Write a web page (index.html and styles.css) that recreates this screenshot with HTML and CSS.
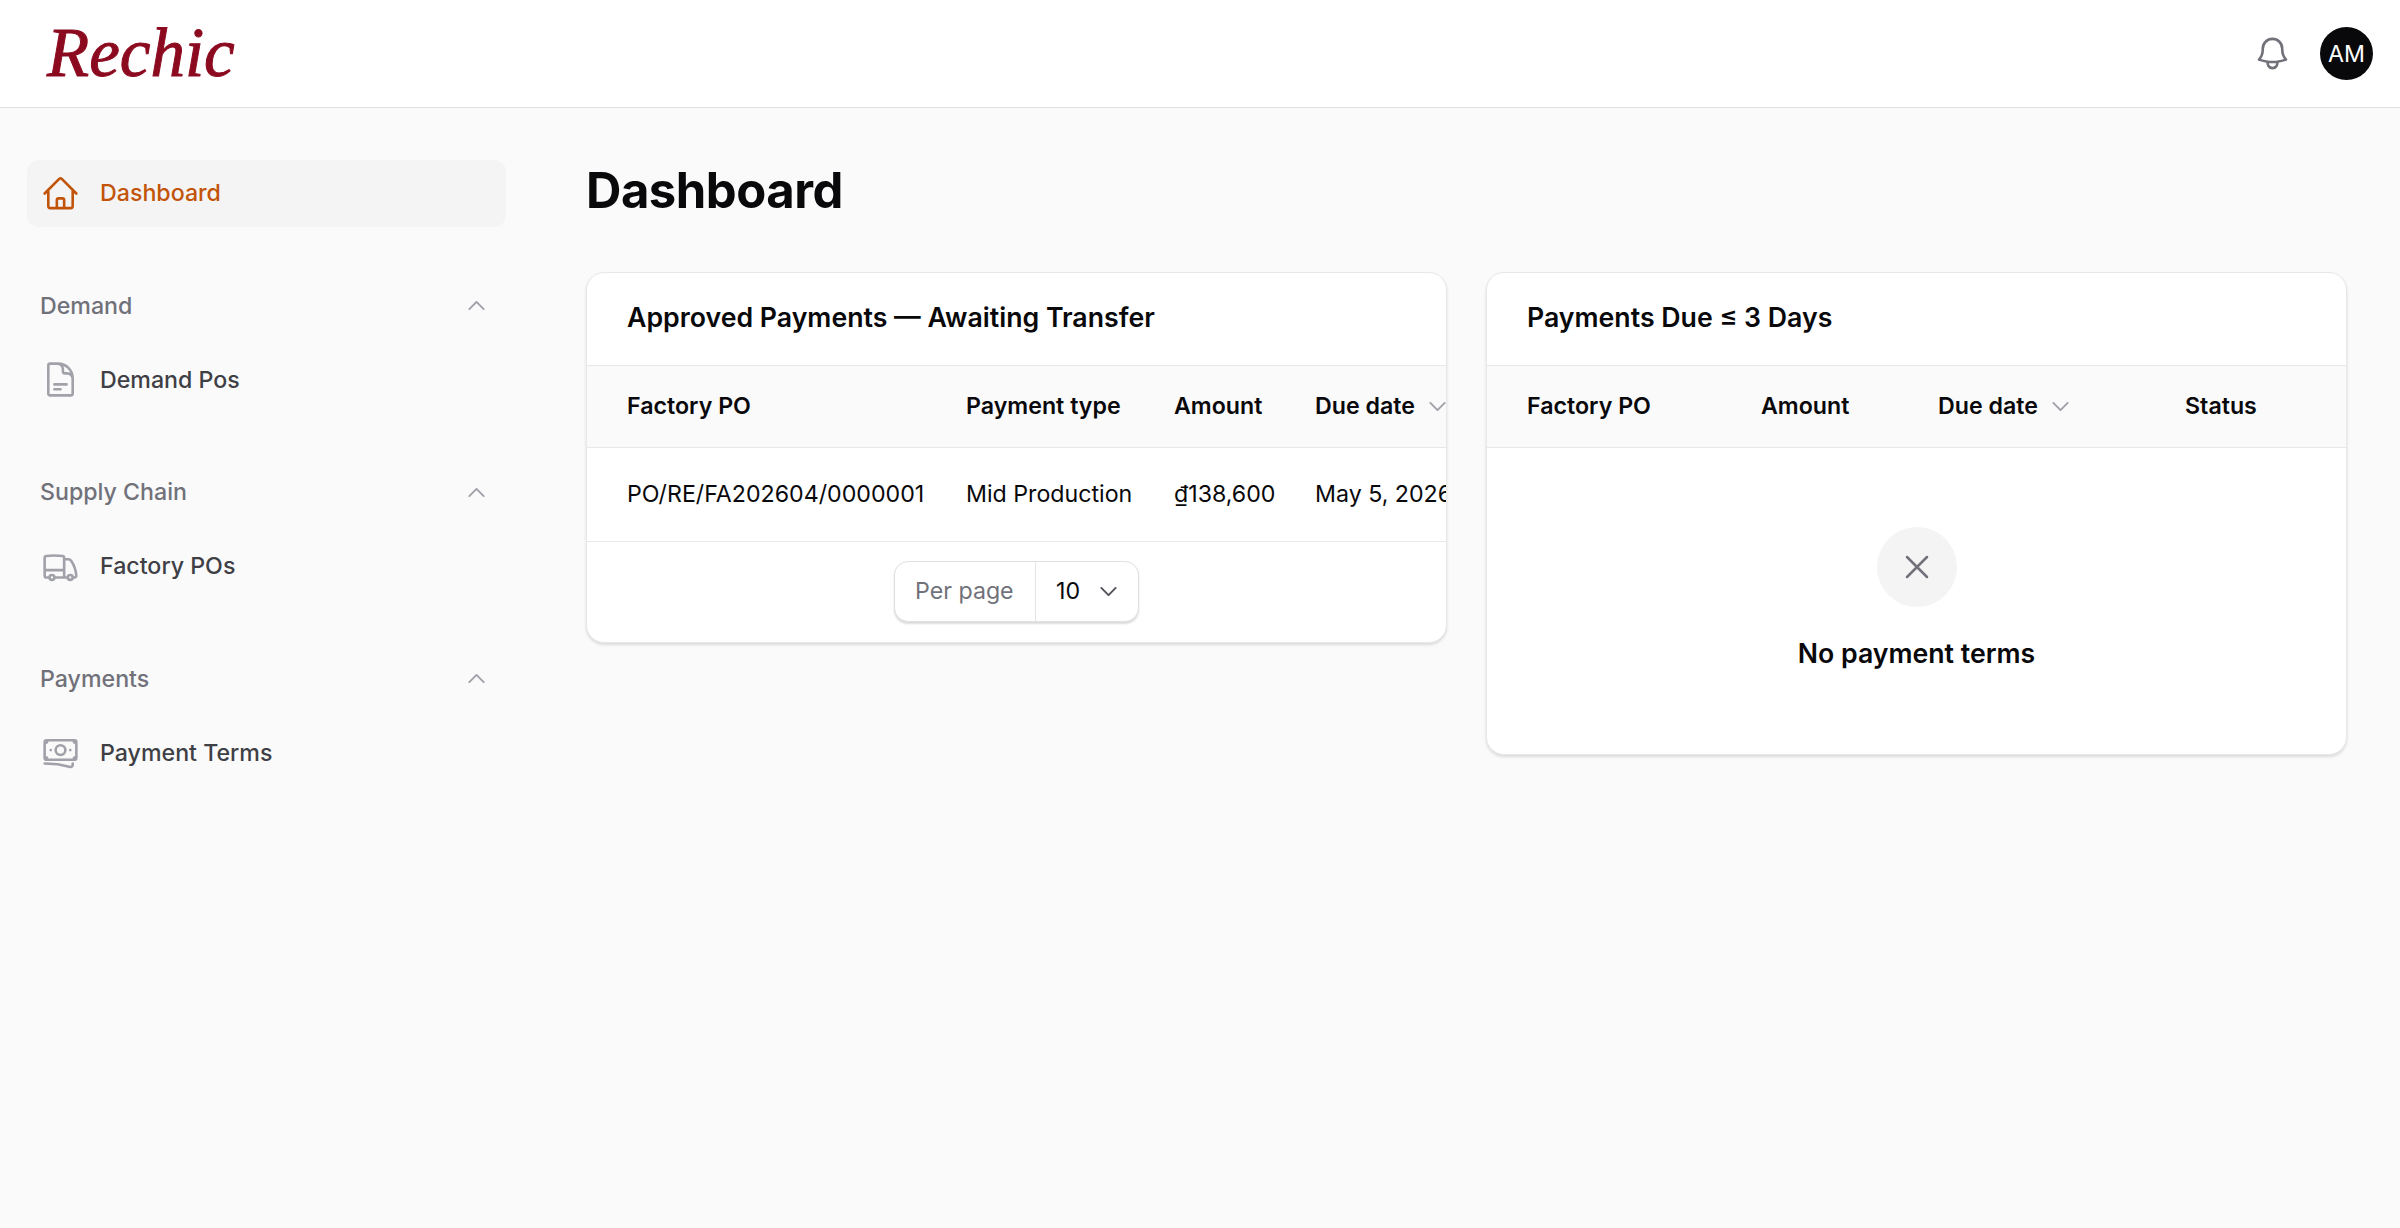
FILE: index.html
```html
<!DOCTYPE html>
<html lang="en">
<head>
  <meta charset="UTF-8">
  <meta name="viewport" content="width=device-width, initial-scale=1.0">
  <title>Dashboard</title>
  <link rel="stylesheet" href="styles.css">
</head>
<body>

<header class="topbar">
  <a href="#" class="logo">Rechic</a>
  <div class="topbar-right">
    <svg class="icon bell" viewBox="0 0 24 24"><path d="M14.857 17.082a23.848 23.848 0 0 0 5.454-1.31A8.967 8.967 0 0 1 18 9.75V9A6 6 0 0 0 6 9v.75a8.967 8.967 0 0 1-2.312 6.022c1.733.64 3.56 1.085 5.455 1.31m5.714 0a24.255 24.255 0 0 1-5.714 0m5.714 0a3 3 0 1 1-5.714 0"/></svg>
    <div class="avatar">AM</div>
  </div>
</header>

<div class="layout">
  <aside class="sidebar">
    <a href="#" class="nav-item active">
      <svg class="icon" viewBox="0 0 24 24"><path d="m2.25 12 8.954-8.955c.44-.439 1.152-.439 1.591 0L21.75 12M4.5 9.75v10.125c0 .621.504 1.125 1.125 1.125H9.75v-4.875c0-.621.504-1.125 1.125-1.125h2.25c.621 0 1.125.504 1.125 1.125V21h4.125c.621 0 1.125-.504 1.125-1.125V9.75M8.25 21h8.25"/></svg>
      <span>Dashboard</span>
    </a>

    <div class="nav-group">
      <div class="nav-label">
        <span>Demand</span>
        <svg class="chevron" viewBox="0 0 24 24"><path d="m4.5 15.75 7.5-7.5 7.5 7.5"/></svg>
      </div>
      <a href="#" class="nav-item">
        <svg class="icon" viewBox="0 0 24 24"><path d="M19.5 14.25v-2.625a3.375 3.375 0 0 0-3.375-3.375h-1.5A1.125 1.125 0 0 1 13.5 7.125v-1.5a3.375 3.375 0 0 0-3.375-3.375H8.25m0 12.75h7.5m-7.5 3H12M10.5 2.25H5.625c-.621 0-1.125.504-1.125 1.125v17.25c0 .621.504 1.125 1.125 1.125h12.75c.621 0 1.125-.504 1.125-1.125V11.25a9 9 0 0 0-9-9Z"/></svg>
        <span>Demand Pos</span>
      </a>
    </div>

    <div class="nav-group">
      <div class="nav-label">
        <span>Supply Chain</span>
        <svg class="chevron" viewBox="0 0 24 24"><path d="m4.5 15.75 7.5-7.5 7.5 7.5"/></svg>
      </div>
      <a href="#" class="nav-item">
        <svg class="icon" viewBox="0 0 24 24"><path d="M8.25 18.75a1.5 1.5 0 0 1-3 0m3 0a1.5 1.5 0 0 0-3 0m3 0h6m-9 0H3.375a1.125 1.125 0 0 1-1.125-1.125V14.25m17.25 4.5a1.5 1.5 0 0 1-3 0m3 0a1.5 1.5 0 0 0-3 0m3 0h1.125c.621 0 1.129-.504 1.09-1.124a17.902 17.902 0 0 0-3.213-9.193 2.056 2.056 0 0 0-1.58-.86H14.25M16.5 18.75h-2.25m0-11.177v-.958c0-.568-.422-1.048-.987-1.106a48.554 48.554 0 0 0-10.026 0 1.106 1.106 0 0 0-.987 1.106v7.635m12-6.677v6.677m0 4.5v-4.5m0 0h-12"/></svg>
        <span>Factory POs</span>
      </a>
    </div>

    <div class="nav-group">
      <div class="nav-label">
        <span>Payments</span>
        <svg class="chevron" viewBox="0 0 24 24"><path d="m4.5 15.75 7.5-7.5 7.5 7.5"/></svg>
      </div>
      <a href="#" class="nav-item">
        <svg class="icon" viewBox="0 0 24 24"><path d="M2.25 18.75a60.07 60.07 0 0 1 15.797 2.101c.727.198 1.453-.342 1.453-1.096V18.75M3.75 4.5v.75A.75.75 0 0 1 3 6h-.75m0 0v-.375c0-.621.504-1.125 1.125-1.125H20.25M2.25 6v9m18-10.5v.75c0 .414.336.75.75.75h.75m-1.5-1.5h.375c.621 0 1.125.504 1.125 1.125v9.75c0 .621-.504 1.125-1.125 1.125h-.375m1.5-1.5H21a.75.75 0 0 0-.75.75v.75m0 0H3.75m0 0h-.375a1.125 1.125 0 0 1-1.125-1.125V15m1.5 1.5v-.75A.75.75 0 0 0 3 15h-.75M15 10.5a3 3 0 1 1-6 0 3 3 0 0 1 6 0Zm3 0h.008v.008H18V10.5Zm-12 0h.008v.008H6V10.5Z"/></svg>
        <span>Payment Terms</span>
      </a>
    </div>
  </aside>

  <main class="content">
    <h1>Dashboard</h1>
    <div class="cards">

      <section class="card">
        <h2 class="card-title">Approved Payments — Awaiting Transfer</h2>
        <div class="table-wrap">
          <table class="table table-approved">
            <thead>
              <tr>
                <th>Factory PO</th>
                <th>Payment type</th>
                <th>Amount</th>
                <th><span class="sort">Due date <svg class="chevron" viewBox="0 0 24 24"><path d="m19.5 8.25-7.5 7.5-7.5-7.5"/></svg></span></th>
              </tr>
            </thead>
            <tbody>
              <tr>
                <td>PO/RE/FA202604/0000001</td>
                <td>Mid Production</td>
                <td>₫138,600</td>
                <td>May 5, 2026</td>
              </tr>
            </tbody>
          </table>
        </div>
        <div class="card-footer">
          <div class="per-page">
            <span class="per-page-label">Per page</span>
            <span class="per-page-value">10 <svg class="chevron" viewBox="0 0 24 24"><path d="m19.5 8.25-7.5 7.5-7.5-7.5"/></svg></span>
          </div>
        </div>
      </section>

      <section class="card">
        <h2 class="card-title">Payments Due ≤ 3 Days</h2>
        <div class="table-wrap">
          <table class="table table-due">
            <thead>
              <tr>
                <th>Factory PO</th>
                <th>Amount</th>
                <th><span class="sort">Due date <svg class="chevron" viewBox="0 0 24 24"><path d="m19.5 8.25-7.5 7.5-7.5-7.5"/></svg></span></th>
                <th>Status</th>
              </tr>
            </thead>
          </table>
        </div>
        <div class="empty">
          <div class="empty-icon">
            <svg class="icon-x" viewBox="0 0 24 24"><path d="M6 18 18 6M6 6l12 12"/></svg>
          </div>
          <p class="empty-text">No payment terms</p>
        </div>
      </section>

    </div>
  </main>
</div>

</body>
</html>
```
FILE: styles.css
```css
* {
  box-sizing: border-box;
}

body {
  margin: 0;
  height: 1228px;
  overflow: hidden;
  font-family: Inter, "Noto Sans", sans-serif;
  font-size: 23.2px;
  color: #09090b;
  background-color: #fafafa;
}

a {
  text-decoration: none;
  color: inherit;
}

svg {
  fill: none;
  stroke: currentColor;
  stroke-width: 1.5;
  stroke-linecap: round;
  stroke-linejoin: round;
  flex-shrink: 0;
}

.topbar {
  display: flex;
  align-items: center;
  justify-content: space-between;
  height: 108px;
  padding: 0 27px 0 47px;
  background-color: #fff;
  border-bottom: 1px solid #e0e0e0;
}

.logo {
  font-family: "Liberation Serif", serif;
  font-style: italic;
  font-size: 69px;
  line-height: 1;
  color: #8c0a1f;
  -webkit-text-stroke: 1px #8c0a1f;
}

.topbar-right {
  display: flex;
  align-items: center;
  gap: 28px;
}

.icon {
  width: 39px;
  height: 39px;
  stroke-width: 1.6;
}

.bell {
  color: #71717a;
}

.avatar {
  display: flex;
  align-items: center;
  justify-content: center;
  width: 53px;
  height: 53px;
  border-radius: 50%;
  background-color: #09090b;
  color: #fff;
  font-weight: 400;
}

.layout {
  display: flex;
}

.sidebar {
  width: 533px;
  flex-shrink: 0;
  padding: 52px 27px 0 27px;
}

.nav-item {
  display: flex;
  align-items: center;
  gap: 20px;
  height: 66.5px;
  padding: 0 14px;
  border-radius: 12px;
  font-weight: 500;
  color: #3f3f46;
}

.nav-item .icon {
  color: #a1a1aa;
}

.nav-item.active {
  background-color: #f4f4f5;
  color: #c2540a;
}

.nav-item.active .icon {
  color: #c2540a;
}

.nav-group {
  margin-top: 61px;
}

.nav-label {
  display: flex;
  align-items: center;
  justify-content: space-between;
  height: 36px;
  margin-bottom: 23px;
  padding: 0 18px 0 13px;
  font-weight: 500;
  color: #71717a;
}

.chevron {
  width: 23px;
  height: 23px;
  stroke-width: 2;
  color: #a1a1aa;
}

.content {
  flex: 1;
  min-width: 0;
  padding: 55px 53px 0 53px;
}

h1 {
  margin: 0 0 53px;
  font-size: 49px;
  line-height: 56px;
  font-weight: 700;
  letter-spacing: -0.5px;
}

.cards {
  display: grid;
  grid-template-columns: 1fr 1fr;
  gap: 39px;
  align-items: start;
}

.card {
  background-color: #fff;
  border: 1px solid #e8e8e8;
  border-radius: 18px;
  box-shadow: 0 2px 3px rgba(0, 0, 0, 0.12);
  overflow: hidden;
}

.card-title {
  display: flex;
  align-items: center;
  height: 93px;
  margin: 0;
  padding: 0 40px 4px;
  font-size: 26.7px;
  font-weight: 600;
  border-bottom: 1px solid #e8e8e8;
}

.table-wrap {
  overflow: hidden;
}

.table {
  table-layout: fixed;
  border-collapse: collapse;
  white-space: nowrap;
}

.table-approved {
  width: 908px;
}

.table-due {
  width: 100%;
}

.table th {
  height: 81px;
  padding: 0 0 0 20px;
  text-align: left;
  font-weight: 600;
  background-color: #fafafa;
  border-bottom: 1px solid #e8e8e8;
}

.table td {
  height: 94px;
  padding: 0 0 0 20px;
  border-bottom: 1px solid #e8e8e8;
}

.table th:first-child,
.table td:first-child {
  padding-left: 40px;
}

.table-approved th:nth-child(1) { width: 359px; }
.table-approved th:nth-child(2) { width: 208px; }
.table-approved th:nth-child(3) { width: 141px; }
.table-approved th:nth-child(4) { width: 200px; }

.table-due th:nth-child(1) { width: 254px; }
.table-due th:nth-child(2) { width: 177px; }
.table-due th:nth-child(3) { width: 247px; }

.sort {
  display: inline-flex;
  align-items: center;
  gap: 11px;
}

.card-footer {
  display: flex;
  justify-content: center;
  padding: 19px 20px 20px;
}

.per-page {
  display: flex;
  align-items: center;
  width: 245px;
  height: 61px;
  background-color: #fff;
  border: 1px solid #e0e0e3;
  border-radius: 14px;
  box-shadow: 0 2px 2px rgba(0, 0, 0, 0.14);
}

.per-page-label {
  display: flex;
  align-items: center;
  height: 100%;
  width: 141px;
  padding-left: 20px;
  color: #71717a;
  border-right: 1px solid #e4e4e7;
}

.per-page-value {
  display: flex;
  align-items: center;
  gap: 17px;
  padding-left: 20px;
}

.per-page-value .chevron {
  color: #52525b;
}

.empty {
  display: flex;
  flex-direction: column;
  align-items: center;
  padding: 79px 0 83px;
}

.empty-icon {
  display: flex;
  align-items: center;
  justify-content: center;
  width: 80px;
  height: 80px;
  border-radius: 50%;
  background-color: #f4f4f5;
}

.icon-x {
  width: 40px;
  height: 40px;
  color: #71717a;
}

.empty-text {
  margin: 28px 0 0;
  font-size: 26.7px;
  line-height: 36px;
  font-weight: 600;
}
```
